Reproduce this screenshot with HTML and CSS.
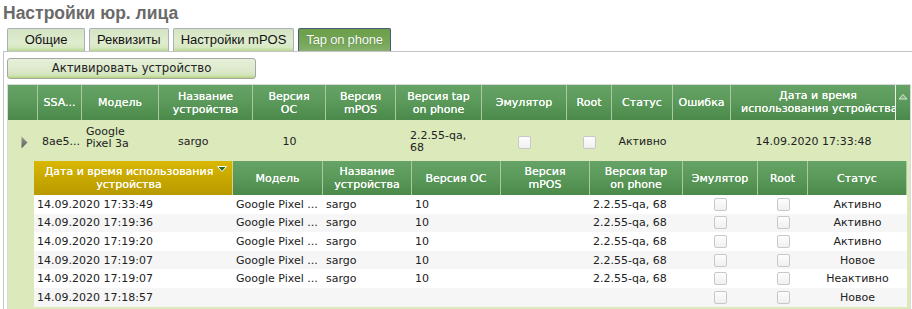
FILE: index.html
```html
<!DOCTYPE html>
<html lang="ru">
<head>
<meta charset="utf-8">
<title>Настройки юр. лица</title>
<link rel="stylesheet" href="styles.css">
</head>
<body>
<h1 class="title">Настройки юр. лица</h1>
<div class="tabs">
  <div class="tab">Общие</div>
  <div class="tab">Реквизиты</div>
  <div class="tab">Настройки mPOS</div>
  <div class="tab active">Tap on phone</div>
</div>
<div class="panel">
  <button class="btn">Активировать устройство</button>
  <div class="grid">
    <div class="ghead main-cols">
      <div class="hc"></div>
      <div class="hc">SSA...</div>
      <div class="hc">Модель</div>
      <div class="hc">Название<br>устройства</div>
      <div class="hc">Версия<br>ОС</div>
      <div class="hc">Версия<br>mPOS</div>
      <div class="hc">Версия tap<br>on phone</div>
      <div class="hc">Эмулятор</div>
      <div class="hc">Root</div>
      <div class="hc">Статус</div>
      <div class="hc">Ошибка</div>
      <div class="hc clip"><span class="clip-in">Дата и время<br>использования устройства</span></div>
      <div class="hc sortcol"><svg width="10" height="7" viewBox="0 0 10 7"><polygon points="1,6 5,1.5 9,6" fill="#7fae7f" stroke="#d6e8d6" stroke-width="1"/></svg></div>
    </div>
    <div class="grow main-cols">
      <div class="dc center"><svg class="exp" width="7" height="13" viewBox="0 0 7 13"><defs><linearGradient id="tg" x1="0" x2="0" y1="0" y2="1"><stop offset="0" stop-color="#9a9a9a"/><stop offset="1" stop-color="#5c5c5c"/></linearGradient></defs><polygon points="0.5,0.5 6.5,6.5 0.5,12.5" fill="url(#tg)"/></svg></div>
      <div class="dc left">8ae5...</div>
      <div class="dc left model">Google<br>Pixel 3a</div>
      <div class="dc left pad-dev">sargo</div>
      <div class="dc center">10</div>
      <div class="dc"></div>
      <div class="dc left pad-ver">2.2.55-qa,<br>68</div>
      <div class="dc center"><span class="cb"></span></div>
      <div class="dc center"><span class="cb"></span></div>
      <div class="dc center">Активно</div>
      <div class="dc"></div>
      <div class="dc center">14.09.2020 17:33:48</div>
      <div class="dc"></div>
    </div>
    <div class="detail">
      <div class="sub">
        <div class="shead sub-cols">
          <div class="hc gold">Дата и время использования<br>устройства<svg class="sortdown" width="10" height="6" viewBox="0 0 10 6"><polygon points="0.5,0.5 9.5,0.5 5,5.5" fill="#2c6a2c" stroke="#ffffff" stroke-width="1"/></svg></div>
          <div class="hc">Модель</div>
          <div class="hc">Название<br>устройства</div>
          <div class="hc">Версия ОС</div>
          <div class="hc">Версия<br>mPOS</div>
          <div class="hc">Версия tap<br>on phone</div>
          <div class="hc">Эмулятор</div>
          <div class="hc">Root</div>
          <div class="hc">Статус</div>
        </div>
        <div class="srow sub-cols">
          <div class="sc">14.09.2020 17:33:49</div><div class="sc">Google Pixel ...</div><div class="sc">sargo</div><div class="sc">10</div><div class="sc"></div><div class="sc">2.2.55-qa, 68</div><div class="sc center"><span class="cb"></span></div><div class="sc center"><span class="cb"></span></div><div class="sc center">Активно</div>
        </div>
        <div class="srow sub-cols">
          <div class="sc">14.09.2020 17:19:36</div><div class="sc">Google Pixel ...</div><div class="sc">sargo</div><div class="sc">10</div><div class="sc"></div><div class="sc">2.2.55-qa, 68</div><div class="sc center"><span class="cb"></span></div><div class="sc center"><span class="cb"></span></div><div class="sc center">Активно</div>
        </div>
        <div class="srow sub-cols">
          <div class="sc">14.09.2020 17:19:20</div><div class="sc">Google Pixel ...</div><div class="sc">sargo</div><div class="sc">10</div><div class="sc"></div><div class="sc">2.2.55-qa, 68</div><div class="sc center"><span class="cb"></span></div><div class="sc center"><span class="cb"></span></div><div class="sc center">Активно</div>
        </div>
        <div class="srow sub-cols">
          <div class="sc">14.09.2020 17:19:07</div><div class="sc">Google Pixel ...</div><div class="sc">sargo</div><div class="sc">10</div><div class="sc"></div><div class="sc">2.2.55-qa, 68</div><div class="sc center"><span class="cb"></span></div><div class="sc center"><span class="cb"></span></div><div class="sc center">Новое</div>
        </div>
        <div class="srow sub-cols">
          <div class="sc">14.09.2020 17:19:07</div><div class="sc">Google Pixel ...</div><div class="sc">sargo</div><div class="sc">10</div><div class="sc"></div><div class="sc">2.2.55-qa, 68</div><div class="sc center"><span class="cb"></span></div><div class="sc center"><span class="cb"></span></div><div class="sc center">Неактивно</div>
        </div>
        <div class="srow sub-cols">
          <div class="sc">14.09.2020 17:18:57</div><div class="sc"></div><div class="sc"></div><div class="sc"></div><div class="sc"></div><div class="sc"></div><div class="sc center"><span class="cb"></span></div><div class="sc center"><span class="cb"></span></div><div class="sc center">Новое</div>
        </div>
      </div>
    </div>
  </div>
</div>
</body>
</html>
```
FILE: styles.css
```css
* { box-sizing: border-box; }
html, body { margin: 0; padding: 0; background: #fff; overflow: hidden; }
body { font-family: "DejaVu Sans", Verdana, sans-serif; font-size: 11px; color: #222; width: 912px; }

.title {
  margin: 0;
  padding: 2px 0 0 3px;
  height: 28px;
  font-family: "Liberation Sans", Arial, sans-serif;
  font-size: 17.5px;
  font-weight: bold;
  color: #6a6a6a;
  line-height: 22px;
}

.tabs { display: flex; gap: 4px; padding-left: 7px; height: 23px; }
.tab {
  min-width: 78px;
  height: 23px;
  padding: 0 7px;
  border: 1px solid #aab0bc;
  border-bottom: none;
  border-radius: 2px 2px 0 0;
  background: linear-gradient(#d4e4c2 0%, #dfeccf 60%, #d6e8c0 85%, #b8d890 100%);
  font-family: "Liberation Sans", Arial, sans-serif;
  font-size: 13px;
  color: #111;
  line-height: 21px;
  text-align: center;
}
.tab.active {
  background: linear-gradient(#6a9e48, #78a85a 70%, #88b070);
  border: 1px solid #4a5a78;
  border-bottom: none;
  color: #fff;
  letter-spacing: -0.2px;
  text-shadow: 0 0 1px #3d6b2a;
}

.panel {
  border-top: 1px solid #c4c4c4;
  border-left: 1px solid #c4c4c4;
  margin-left: 3px;
  padding: 6px 0 0 3px;
  height: 258px;
}

.btn {
  display: block;
  width: 249px;
  height: 21px;
  padding: 0;
  border: 1px solid #a4a8a4;
  border-radius: 3px;
  background: linear-gradient(#e6efd8 0%, #dde9cc 60%, #d2e4ba 85%, #b4d47c 100%);
  font-family: "DejaVu Sans", Verdana, sans-serif;
  font-size: 11.7px;
  color: #222;
  text-align: center;
  line-height: 19px;
}

.grid {
  margin-top: 5px;
  width: 904px;
  border: 1px solid #d9d9d9;
  border-bottom: none;
}

.main-cols { display: grid; grid-template-columns: 30px 44px 77px 94px 73px 70px 86px 85px 45px 61px 58px 165px 14px; }
.sub-cols { display: grid; grid-template-columns: 199px 90px 89px 89px 89px 93px 75px 50px 99px; }

.ghead { height: 35px; background: linear-gradient(#66a366, #5a995a 50%, #4a894a); }
.shead { height: 34px; background: linear-gradient(#66a366, #5a995a 50%, #4a894a); }

.hc {
  display: flex;
  align-items: center;
  justify-content: center;
  text-align: center;
  color: #fff;
  line-height: 13px;
  padding: 0 2px;
  border-right: 1px solid #a9c9a3;
  overflow: hidden;
  white-space: nowrap;
  text-shadow: 0 0 0.6px #ffffff;
  position: relative;
}
.hc.clip { display: block; padding: 4px 0 0 10px; text-align: center; }
.clip-in { display: block; width: 100%; }
.hc.sortcol { align-items: flex-start; padding-top: 8px; border-right: none; border-left: 1px solid #e6f0e6; margin-left: -1px; }
.hc.gold {
  background: linear-gradient(#d8b800, #c8a800 50%, #b89a00);
  padding: 0 12px 0 4px;
  border-right: 1px solid #e0d080;
}
.sortdown { position: absolute; right: 5px; top: 5px; }

.grow {
  height: 39px;
  background: #dbe9bb;
  padding-top: 5px;
}
.dc {
  display: flex;
  align-items: center;
  color: #222;
  line-height: 12px;
  white-space: nowrap;
}
.dc.left { padding-left: 4px; }
.dc.center { justify-content: center; }
.dc.model { padding-bottom: 8px; }
.dc.pad-dev { padding-left: 19px; }
.dc.pad-ver { padding-left: 14px; }
.exp { margin-left: 2px; }

.detail {
  background: #dbe9bb;
  padding: 2px 3px 8px 26px;
}
.sub { background: #fff; }
.srow { height: 18.6px; background: #fff; }
.srow:nth-child(odd) { background: #f6f6f6; }
.sc {
  display: flex;
  align-items: center;
  padding-left: 3px;
  white-space: nowrap;
  overflow: hidden;
  color: #222;
}
.sc.center { justify-content: center; padding-left: 0; }

.cb {
  display: inline-block;
  width: 13px;
  height: 13px;
  border: 1px solid #c8c8c8;
  border-radius: 2px;
  background: linear-gradient(#fdfdfd, #f0f0f0);
}
```
